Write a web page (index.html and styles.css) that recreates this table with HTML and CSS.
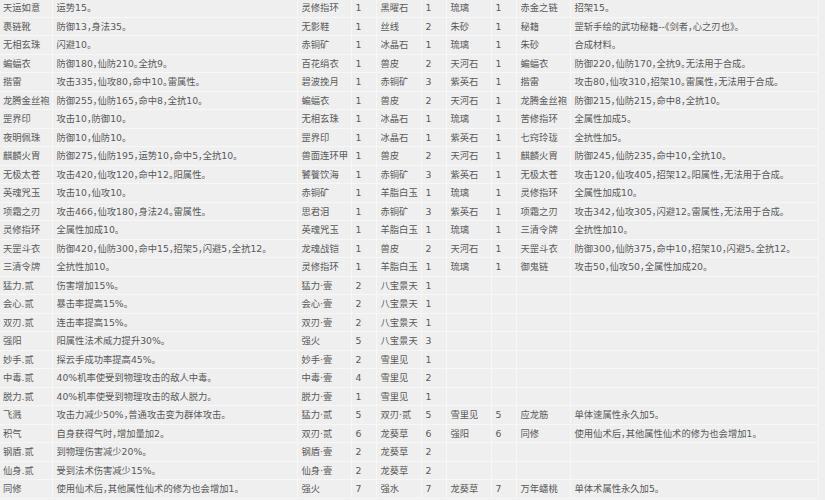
FILE: index.html
```html
<!DOCTYPE html>
<html lang="zh-CN">
<head>
<meta charset="utf-8">
<title>合成表</title>
<link rel="stylesheet" href="styles.css">
</head>
<body>
<table class="recipes">
  <colgroup>
    <col class="c-name"><col class="c-desc"><col class="c-item"><col class="c-qty"><col class="c-item2"><col class="c-qty"><col class="c-item2"><col class="c-qty"><col class="c-res"><col class="c-rdesc">
  </colgroup>
  <tbody>
    <tr><td class="first">天运如意</td><td>运势15。</td><td>灵修指环</td><td>1</td><td>黑曜石</td><td>1</td><td>琉璃</td><td>1</td><td>赤金之链</td><td>招架15。</td></tr>
    <tr><td class="first">裹链靴</td><td>防御13，身法35。</td><td>无影鞋</td><td>1</td><td>丝线</td><td>2</td><td>朱砂</td><td>1</td><td>秘籍</td><td>罡斩手绘的武功秘籍--《剑者，心之刃也》。</td></tr>
    <tr><td class="first">无相玄珠</td><td>闪避10。</td><td>赤铜矿</td><td>1</td><td>冰晶石</td><td>1</td><td>琉璃</td><td>1</td><td>朱砂</td><td>合成材料。</td></tr>
    <tr><td class="first">蝙蝠衣</td><td>防御180，仙防210。全抗9。</td><td>百花绢衣</td><td>1</td><td>兽皮</td><td>2</td><td>天河石</td><td>1</td><td>蝙蝠衣</td><td>防御220，仙防170，全抗9。无法用于合成。</td></tr>
    <tr><td class="first">揩雷</td><td>攻击335，仙攻80，命中10。雷属性。</td><td>碧波挽月</td><td>1</td><td>赤铜矿</td><td>3</td><td>紫英石</td><td>1</td><td>揩雷</td><td>攻击80，仙攻310，招架10。雷属性，无法用于合成。</td></tr>
    <tr><td class="first">龙腾金丝袍</td><td>防御255，仙防165，命中8，全抗10。</td><td>蝙蝠衣</td><td>1</td><td>兽皮</td><td>2</td><td>天河石</td><td>1</td><td>龙腾金丝袍</td><td>防御215，仙防215，命中8，全抗10。</td></tr>
    <tr><td class="first">罡界印</td><td>攻击10，防御10。</td><td>无相玄珠</td><td>1</td><td>冰晶石</td><td>1</td><td>琉璃</td><td>1</td><td>苦修指环</td><td>全属性加成5。</td></tr>
    <tr><td class="first">夜明佩珠</td><td>防御10，仙防10。</td><td>罡界印</td><td>1</td><td>冰晶石</td><td>1</td><td>紫英石</td><td>1</td><td>七窍玲珑</td><td>全抗性加5。</td></tr>
    <tr><td class="first">麒麟火胄</td><td>防御275，仙防195，运势10，命中5，全抗10。</td><td>兽面连环甲</td><td>1</td><td>兽皮</td><td>2</td><td>天河石</td><td>1</td><td>麒麟火胄</td><td>防御245，仙防235，命中10，全抗10。</td></tr>
    <tr><td class="first">无极太苍</td><td>攻击420，仙攻120，命中12。阳属性。</td><td>饕餮饮海</td><td>1</td><td>赤铜矿</td><td>3</td><td>紫英石</td><td>1</td><td>无极太苍</td><td>攻击120，仙攻405，招架12。阳属性，无法用于合成。</td></tr>
    <tr><td class="first">英魂咒玉</td><td>攻击10，仙攻10。</td><td>赤铜矿</td><td>1</td><td>羊脂白玉</td><td>1</td><td>琉璃</td><td>1</td><td>灵修指环</td><td>全属性加成10。</td></tr>
    <tr><td class="first">项霜之刃</td><td>攻击466，仙攻180，身法24。雷属性。</td><td>思君泪</td><td>1</td><td>赤铜矿</td><td>3</td><td>紫英石</td><td>1</td><td>项霜之刃</td><td>攻击342，仙攻305，闪避12。雷属性，无法用于合成。</td></tr>
    <tr><td class="first">灵修指环</td><td>全属性加成10。</td><td>英魂咒玉</td><td>1</td><td>羊脂白玉</td><td>1</td><td>琉璃</td><td>1</td><td>三清令牌</td><td>全抗性加10。</td></tr>
    <tr><td class="first">天罡斗衣</td><td>防御420，仙防300，命中15，招架5，闪避5，全抗12。</td><td>龙魂战铠</td><td>1</td><td>兽皮</td><td>2</td><td>天河石</td><td>1</td><td>天罡斗衣</td><td>防御300，仙防375，命中10，招架10，闪避5。全抗12。</td></tr>
    <tr><td class="first">三清令牌</td><td>全抗性加10。</td><td>灵修指环</td><td>1</td><td>羊脂白玉</td><td>1</td><td>琉璃</td><td>1</td><td>御鬼链</td><td>攻击50，仙攻50，全属性加成20。</td></tr>
    <tr><td class="first">猛力.贰</td><td>伤害增加15%。</td><td>猛力·壹</td><td>2</td><td>八宝景天</td><td>1</td><td></td><td></td><td></td><td></td></tr>
    <tr><td class="first">会心.贰</td><td>暴击率提高15%。</td><td>会心·壹</td><td>2</td><td>八宝景天</td><td>1</td><td></td><td></td><td></td><td></td></tr>
    <tr><td class="first">双刃.贰</td><td>连击率提高15%。</td><td>双刃·壹</td><td>2</td><td>八宝景天</td><td>1</td><td></td><td></td><td></td><td></td></tr>
    <tr><td class="first">强阳</td><td>阳属性法术威力提升30%。</td><td>强火</td><td>5</td><td>八宝景天</td><td>3</td><td></td><td></td><td></td><td></td></tr>
    <tr><td class="first">妙手.贰</td><td>探云手成功率提高45%。</td><td>妙手·壹</td><td>2</td><td>雪里见</td><td>1</td><td></td><td></td><td></td><td></td></tr>
    <tr><td class="first">中毒.贰</td><td>40%机率使受到物理攻击的敌人中毒。</td><td>中毒·壹</td><td>4</td><td>雪里见</td><td>2</td><td></td><td></td><td></td><td></td></tr>
    <tr><td class="first">脱力.贰</td><td>40%机率使受到物理攻击的敌人脱力。</td><td>脱力·壹</td><td>1</td><td>雪里见</td><td>1</td><td></td><td></td><td></td><td></td></tr>
    <tr><td class="first">飞溅</td><td>攻击力减少50%，普通攻击变为群体攻击。</td><td>猛力·贰</td><td>5</td><td>双刃·贰</td><td>5</td><td>雪里见</td><td>5</td><td>应龙筋</td><td>单体速属性永久加5。</td></tr>
    <tr><td class="first">积气</td><td>自身获得气时，增加量加2。</td><td>双刃·贰</td><td>6</td><td>龙葵草</td><td>6</td><td>强阳</td><td>6</td><td>同修</td><td>使用仙术后，其他属性仙术的修为也会增加1。</td></tr>
    <tr><td class="first">钢盾.贰</td><td>到物理伤害减少20%。</td><td>钢盾·壹</td><td>2</td><td>龙葵草</td><td>2</td><td></td><td></td><td></td><td></td></tr>
    <tr><td class="first">仙身.贰</td><td>受到法术伤害减少15%。</td><td>仙身·壹</td><td>2</td><td>龙葵草</td><td>2</td><td></td><td></td><td></td><td></td></tr>
    <tr><td class="first">同修</td><td>使用仙术后，其他属性仙术的修为也会增加1。</td><td>强火</td><td>7</td><td>强水</td><td>7</td><td>龙葵草</td><td>7</td><td>万年蟠桃</td><td>单体术属性永久加5。</td></tr>
  </tbody>
</table>
</body>
</html>
```
FILE: styles.css
```css
html, body {
  margin: 0;
  padding: 0;
  background: #efefef;
  overflow: hidden;
}
body {
  font-family: "DejaVu Sans", "Noto Sans CJK SC", sans-serif;
  font-size: 9.3px;
  color: #595959;
  font-feature-settings: "halt";
}
.recipes {
  border-collapse: collapse;
  table-layout: fixed;
  width: 818px;
  margin-top: -2px;
}
.c-name { width: 52px; }
.c-desc { width: 245px; }
.c-item { width: 54px; }
.c-qty { width: 25px; }
.c-item2 { width: 45px; }
.c-res { width: 54px; }
.c-rdesc { width: 248px; }
.recipes tr {
  height: 18.5px;
}
.recipes td {
  border: 1px solid #f7f7f7;
  padding: 0 0 0 4px;
  line-height: 1;
  white-space: nowrap;
  overflow: hidden;
  vertical-align: middle;
}
.recipes td.first {
  padding-left: 3px;
  border-left: none;
}
```
